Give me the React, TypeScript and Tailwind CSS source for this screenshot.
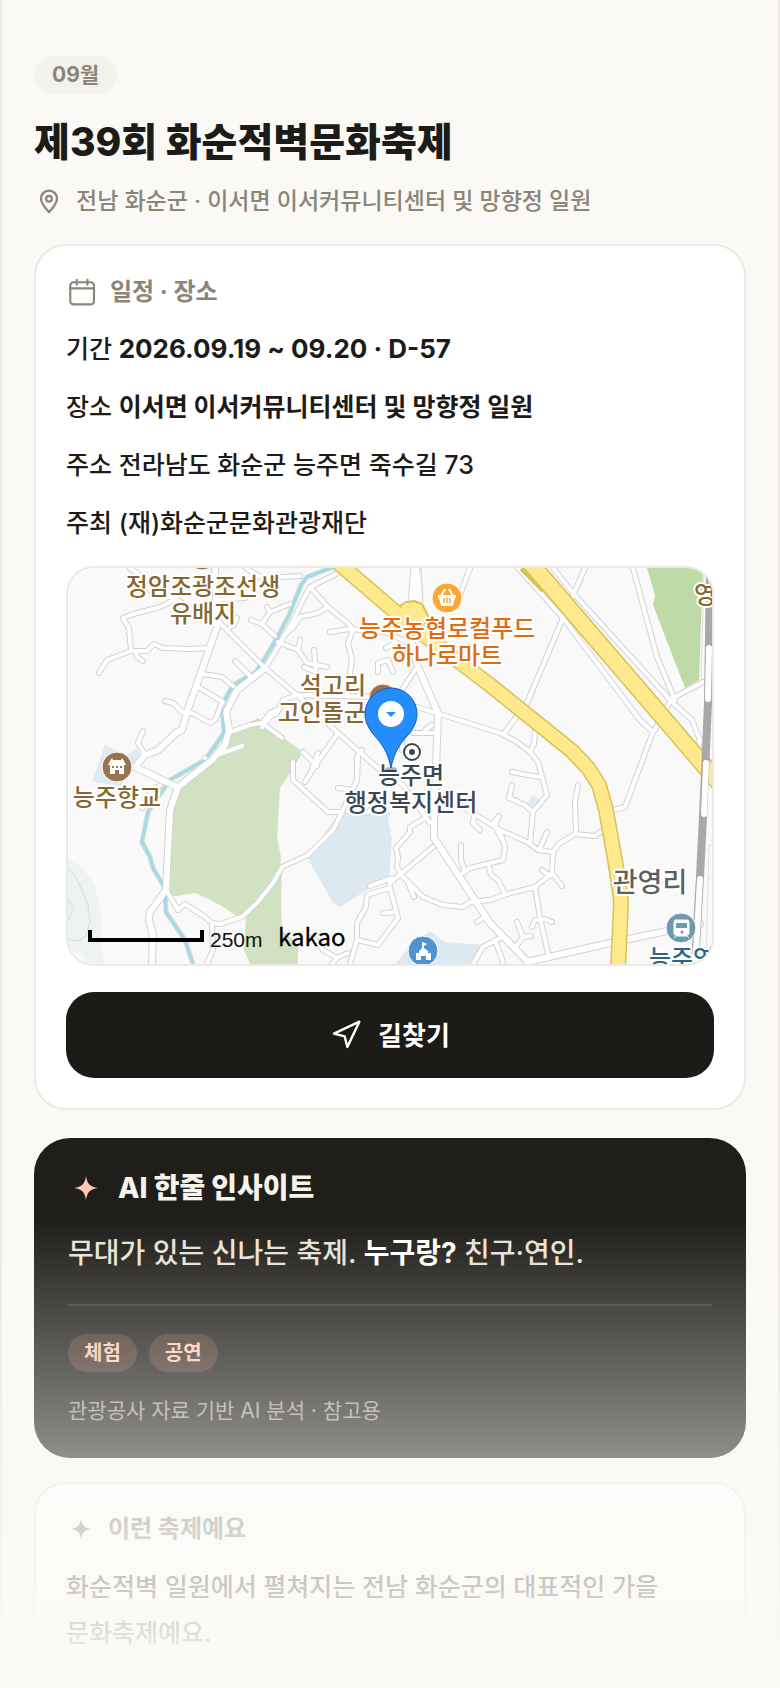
import type { ReactNode } from "react";
import { Navigation } from "lucide-react";

interface LabelProps {
  x: number;
  y: number;
  color: string;
  size?: number;
  anchor?: "start" | "middle" | "end";
  children: ReactNode;
}

const roads = [
  "M176 599L160 607L130 615L123 618L129 628L131 651L107 660L99 673",
  "M131 651H147L154 644L163 648L192 649L208 648",
  "M136 652L137 657L143 661",
  "M130 568L142 577L150 590L176 599L196 612",
  "M246 568L262 578L300 576M217 600L245 598",
  "M145 755L138 743L143 731",
  "M203 674L222 677L233 686",
  "M198 687L223 702",
  "M165 701L173 703L182 712L192 713L210 723L215 720L222 703",
  "M235 661L250 676M237 618L234 625L230 627",
  "M251 620L262 624L275 636M262 624L270 612L267 607M270 612L290 604",
  "M340 572L310 587L304 598L292 623L272 657L265 668",
  "M217 620L265 668L297 695L338 733L380 770L403 785L430 823",
  "M310 587L328 607L318 613L300 617L293 628L284 635",
  "M328 607L350 625L353 630L348 643L352 660L347 695",
  "M330 632L350 629L385 632L407 642",
  "M278 642L298 650L307 663L327 667M300 640L298 650M314 650L316 672L304 667",
  "M378 672V663L388 660L393 672M386 648L396 642",
  "M415 670L400 693M297 695L377 697M297 695L283 700L277 713L270 717L262 727",
  "M338 733L317 763L305 782M293 762V780L328 812L342 812",
  "M303 752L317 766M318 753L312 768",
  "M417 707L500 733L517 742L530 752L538 762L547 795L533 812L530 843",
  "M413 733H437M425 730L432 725M402 738V750",
  "M470 568L458 600",
  "M585 568L563 618L527 703L503 735M535 730L534 744L530 752",
  "M518 568L563 618L640 720L653 732L625 807L613 810",
  "M553 568L573 593L673 703L692 720L700 740L698 750",
  "M633 568L657 657L675 700",
  "M655 730L667 707L673 698L703 682",
  "M447 797L500 830L527 842L538 850L553 852L560 843L575 834L595 836L603 830",
  "M578 785L575 803L576 834M547 832L540 848M498 817L493 824",
  "M553 852L552 873L535 887L507 894L490 900L470 902L463 907L443 905L423 897L403 877L397 867L398 857L396 848L410 832L410 827L425 818",
  "M552 873L562 886M542 870L550 876",
  "M535 887L540 918L548 953M532 927L535 920L545 919L552 922",
  "M500 832L505 847L503 860L470 868L463 873M461 845V860L465 872",
  "M489 867L491 875L498 880L505 894",
  "M517 922L523 937L515 948M523 937L531 936",
  "M512 785L509 798L525 805L533 812M512 772L527 775L540 777",
  "M495 940L503 962M500 938L483 947L473 964",
  "M474 815L473 823L480 830M499 816L495 826L501 838",
  "M433 847L390 883L389 888L367 895L366 907L357 923L357 940L350 964",
  "M370 886L392 878M390 888L398 918L378 945L357 940M383 913L395 912",
  "M338 788L352 790M358 758L357 780M367 813L378 803M409 885L414 897",
  "M477 922L485 917",
  "M313 937L323 950L337 958L348 953M337 958L332 964",
  "M212 923L213 950L207 964M160 785L148 795L142 808",
  "M168 893L178 910L185 904L205 917L212 923L220 924L242 917L257 903L273 883L282 867L308 855L333 830L342 812L357 780L357 757L362 750",
  "M217 755L242 746M230 732L250 725L262 723L282 738",
  "M262 723L270 713L280 708",
];

const wideRoads = [
  "M215 568L217 627L187 712L182 730L177 732L158 750L145 755L135 767L177 787",
  "M265 668L250 680L237 690L226 712L229 730L225 745L212 760L178 787L170 810L168 850L166 890L150 912L149 920L153 935L152 964",
  "M416 568L414 600M408 630L418 667L438 713L434 823V838L490 923L527 961",
  "M527 962L610 943L700 924",
];

const river =
  "M333 567L307 577L301 585L289 615L277 638L262 663L256 672L233 685L222 705L224 733L205 760L170 780L148 812L142 842L150 857L153 868L165 888L166 912L185 940L193 964";

const Label = ({ x, y, color, size = 24, anchor = "middle", children }: LabelProps) => (
  <text
    x={x}
    y={y}
    fontSize={size}
    fontWeight={500}
    textAnchor={anchor}
    fill={color}
    stroke="#fff"
    strokeWidth={4}
    strokeLinejoin="round"
    paintOrder="stroke"
  >
    {children}
  </text>
);

const PinIcon = () => (
  <svg className="size-[30px] shrink-0" viewBox="0 0 24 24" fill="none" stroke="currentColor" strokeWidth={1.8}>
    <path d="M12 21C9 17.600 5.600 14.200 5.600 10a6.400 6.400 0 0 1 12.800 0C18.400 14.200 15 17.600 12 21Z" strokeLinejoin="round" />
    <circle cx="12" cy="10.200" r="2.300" />
  </svg>
);

const CalendarIcon = () => (
  <svg
    className="size-8 shrink-0"
    viewBox="0 0 24 24"
    fill="none"
    stroke="currentColor"
    strokeWidth={1.6}
    strokeLinecap="round"
  >
    <rect x="3.200" y="4.700" width="17.800" height="16.600" rx="2.400" />
    <path d="M3.200 9.300H21M8.100 2.900V6.600M16.100 2.900V6.600" />
  </svg>
);

const SparkIcon = ({ className }: { className: string }) => (
  <svg className={className} viewBox="0 0 24 24" fill="currentColor">
    <path d="M12 4C12.800 9.200 14.600 11.200 20 12C14.600 12.800 12.800 14.800 12 20C11.200 14.800 9.400 12.800 4 12C9.400 11.200 11.200 9.200 12 4Z" />
  </svg>
);

const FestivalMap = () => (
  <svg
    className="block size-full"
    viewBox="68 568 644 396"
    preserveAspectRatio="xMidYMid slice"
    role="img"
    aria-label="능주면 행정복지센터 주변 지도"
  >
    <rect x="0" y="500" width="780" height="500" fill="#f9f9f9" />

    {/* land use */}
    <path d="M0 850L68 860L80 865L95 885L101 915L101 945L104 964H0Z" fill="#edf3ef" />
    <path d="M68 869L76 877L88 905L90 922L86 936L78 941L68 939M68 898L74 909L68 920" fill="none" stroke="#d5dbd7" />
    <path d="M68 950L83 953L86 964H68Z" fill="#f9f9f9" />
    <path
      d="M230 732L258 718L270 728L303 752L292 770L280 788L277 838L281 857L280 870L270 885L257 903L238 917L222 906L196 893L170 897L171 815L180 787L212 757Z"
      fill="#d1e2c2"
    />
    <path d="M246 916L270 890L282 868L281 905L282 930L298 945V964H250L244 950Z" fill="#d1e2c2" />
    <path d="M647 568L655 595L653 605L685 688L699 680L703 568Z" fill="#bfdaa9" />
    <path d="M92 782L105 745L127 755L137 749L142 758L125 775L122 786Z" fill="#dfeaf2" />
    <path d="M307 857L340 812L391 812L388 820L392 838L389 878L370 888L340 907L333 903Z" fill="#dde9f1" />
    <path d="M395 964L413 943L430 931L445 942L483 945L477 964Z" fill="#dde9f1" />
    <path d="M527 803L533 795L541 801L534 809Z" fill="#dcebf3" />

    {/* side roads */}
    <g fill="none" strokeLinecap="round" strokeLinejoin="round">
      <g stroke="#d2d2d2">
        {roads.map((d) => (
          <path key={d} d={d} strokeWidth={6} />
        ))}
        {wideRoads.map((d) => (
          <path key={d} d={d} strokeWidth={8} />
        ))}
      </g>
      <path d={river} stroke="#d1e2c2" strokeWidth={5} />
      <path d={river} stroke="#a3d8ee" strokeWidth={3} />
      <g stroke="#fff">
        {roads.map((d) => (
          <path key={d} d={d} strokeWidth={4} />
        ))}
        {wideRoads.map((d) => (
          <path key={d} d={d} strokeWidth={6} />
        ))}
      </g>
      <circle cx="205" cy="758" r="2.500" fill="#fff" stroke="#d2d2d2" />
    </g>
    <path d="M410 568L408 602L421 604L419 568Z" fill="#fff" />
    <path d="M411 568L408 602M421 568L423 602" stroke="#d2d2d2" />

    {/* trunk roads */}
    <g fill="none" strokeLinejoin="round">
      <path d="M395 609L406 602L414 601L422 604L430 620L414 630Z" fill="#ffe98c" stroke="#d6c256" strokeWidth={2} />
      <path
        d="M335 560L407 622L490 685L572 751L588 768L599 785L606 810L615 860L620 893L621 903L618 970"
        stroke="#d6c256"
        strokeWidth={16}
      />
      <path d="M526 564L548 586M528 560L720 784" stroke="#d6c256" strokeWidth={18} />
      <path
        d="M335 560L407 622L490 685L572 751L588 768L599 785L606 810L615 860L620 893L621 903L618 970"
        stroke="#ffe98c"
        strokeWidth={13}
      />
      <path d="M528 560L720 784" stroke="#ffe98c" strokeWidth={15} />
      <path d="M399 609L408 604L414 603L420 606L427 620L416 628Z" fill="#ffe98c" />
    </g>

    {/* railway */}
    <g fill="none">
      <path d="M704 568L701 680M712 845H709L706 964" stroke="#dedede" />
      <path d="M710 568L708 703L705 773L703 817L700 877L695 964" stroke="#a8a8a8" strokeWidth={8} />
      <path d="M709 648L708 699M706 763L704 814M700 879L695 970" stroke="#fff" strokeWidth={6} strokeLinecap="round" />
    </g>

    {/* place badges */}
    <g stroke="#fff" strokeWidth={1}>
      <circle cx="202" cy="556" r="14" fill="#9b714e" />
      <circle cx="383" cy="698" r="14" fill="#9b714e" />
      <circle cx="117" cy="767" r="15" fill="#9b714e" />
      <circle cx="447" cy="598" r="15" fill="#f9a632" />
      <circle cx="423" cy="951" r="15" fill="#4f93cf" />
      <circle cx="681" cy="928" r="15" fill="#6f9aac" />
    </g>
    <path
      d="M110 761L112 758L113 760H121L122 758L124 761L126 765H124V774H119V770H115V774H110V765H108Z"
      fill="#fff"
    />
    <path d="M112 766H114V768H112ZM116 766H118V768H116ZM120 766H122V768H120Z" fill="#9b714e" />
    <path d="M438 595H456V598H455L453 606H441L439 598H438Z" fill="#fff" />
    <path d="M441 596L445 589M453 596L449 589" stroke="#fff" strokeWidth={2} />
    <path d="M444 598V603M447 598V603M450 598V603" stroke="#f9a632" strokeWidth={1.5} />
    <path d="M423 942L427 944L424 946V948L428 951V953H431V960H426V956H421V960H416V953H419V951L422 948V942Z" fill="#fff" />
    <path d="M675 920H688L689 922V934L686 936H677L674 934V922ZM676 936L674 938M687 936L689 938" fill="#fff" stroke="#fff" />
    <path d="M676 923H687V928H676Z" fill="#6f9aac" />
    <circle cx="682" cy="932" r="1.500" fill="#6f9aac" />

    {/* place names */}
    <g className="font-['Noto_Sans_CJK_KR',sans-serif]">
      <Label x={203} y={595} color="#866731">정암조광조선생</Label>
      <Label x={203} y={622} color="#866731">유배지</Label>
      <Label x={447} y={637} color="#e06c10">능주농협로컬푸드</Label>
      <Label x={447} y={664} color="#e06c10">하나로마트</Label>
      <Label x={366} y={694} color="#866731" anchor="end">석고리</Label>
      <Label x={366} y={721} color="#866731" anchor="end">고인돌군</Label>
      <Label x={117} y={806} color="#866731">능주향교</Label>
      <Label x={411} y={784} color="#3b4750">능주면</Label>
      <Label x={411} y={811} color="#3b4750">행정복지센터</Label>
      <Label x={650} y={892} color="#5f5f5f" size={27}>관영리</Label>
      <Label x={682} y={967} color="#2f6582">능주역</Label>
      <Label x={694} y={603} color="#866731" anchor="start">영</Label>
      <text x="278" y="946" fontSize={24} fontWeight={400} stroke="#000" strokeWidth={0.3}>kakao</text>
    </g>
    <circle cx="412" cy="752" r="10" fill="#fff" />
    <circle cx="412" cy="752" r="8" fill="none" stroke="#3b4750" strokeWidth={2} />
    <circle cx="412" cy="752" r="3" fill="#3b4750" />

    {/* scale bar */}
    <path d="M90 930V940H202V930" fill="none" stroke="#000" strokeWidth={4} />
    <text className="font-['Liberation_Sans',sans-serif]" x="210" y="947" fontSize={21} fill="#111">
      250m
    </text>

    {/* selected spot */}
    <ellipse cx="391" cy="769" rx="6" ry="2" fill="#000" opacity={0.3} />
    <path
      d="M391 768C388 752 382 744 374 735C368 728 365 721 365 714A26 26 0 0 1 417 714C417 721 414 728 408 735C400 744 394 752 391 768Z"
      fill="#258cfc"
      stroke="#1757bd"
    />
    <circle cx="391" cy="714" r="13" fill="#fff" />
    <path d="M386 712H396L391 717Z" fill="#258cfc" />
  </svg>
);

export default function App() {
  const tags = ["체험", "공연"];

  return (
    <main className="relative min-h-screen border-x-2 border-[#ebe9e1] bg-[#faf9f5] px-8 pt-14 font-['Inter','Noto_Sans_CJK_KR',sans-serif] font-medium text-[#1c1b17]">
      <header>
        <span className="inline-flex h-[38px] items-center rounded-full bg-[#f3f2ed] px-[18px] align-top text-[21px] font-bold text-[#8a8578]">
          09월
        </span>
        <h1 className="mt-[22px] text-[39px] leading-[52px] font-extrabold">제39회 화순적벽문화축제</h1>
        <p className="mt-[18px] flex items-center gap-3 text-[23px] leading-[30px] text-[#8a8578]">
          <PinIcon />
          전남 화순군 · 이서면 이서커뮤니티센터 및 망향정 일원
        </p>
      </header>

      <section className="mt-7 rounded-[32px] border-2 border-[#ebe9e1] bg-white p-[30px]">
        <h2 className="flex items-center gap-3 text-2xl leading-8 font-bold text-[#8a8578]">
          <CalendarIcon />
          일정 · 장소
        </h2>
        <div className="mt-5 flex flex-col gap-4 text-[25px] leading-[42px]">
          <p>
            기간 <strong className="text-[26px]">2026.09.19 ~ 09.20 · D-57</strong>
          </p>
          <p>
            장소 <strong>이서면 이서커뮤니티센터 및 망향정 일원</strong>
          </p>
          <p>주소 전라남도 화순군 능주면 죽수길 73</p>
          <p>주최 (재)화순군문화관광재단</p>
        </div>
        <div className="mt-[22px] h-[400px] overflow-hidden rounded-[28px] border-2 border-[#ebe9e1]">
          <FestivalMap />
        </div>
        <button
          type="button"
          className="mt-[26px] flex h-[86px] w-full items-center justify-center gap-4 rounded-[28px] bg-[#1c1b17] text-[26px] font-bold text-white"
        >
          <Navigation className="size-8" strokeWidth={1.8} />
          길찾기
        </button>
      </section>

      <section className="mt-7 rounded-[36px] bg-[#1f1e1a] px-[34px] py-8">
        <h2 className="flex items-center gap-[14px] text-[28px] leading-9 font-extrabold text-[#f5f3ec]">
          <SparkIcon className="size-9 shrink-0 text-[#ffc9b5]" />
          AI 한줄 인사이트
        </h2>
        <p className="mt-6 text-[28px] leading-[46px] text-[#e6e2d6]">
          무대가 있는 신나는 축제. <strong className="text-white">누구랑?</strong> 친구·연인.
        </p>
        <hr className="mt-7 border-t-2 border-white/12" />
        <ul className="mt-7 flex gap-3">
          {tags.map((tag) => (
            <li
              key={tag}
              className="flex h-[38px] items-center rounded-full bg-[#ff9c7d]/18 px-4 text-xl font-bold text-[#ffc9b5]"
            >
              {tag}
            </li>
          ))}
        </ul>
        <p className="mt-6 text-[21px] leading-[30px] font-normal text-[#a09c90]">
          관광공사 자료 기반 AI 분석 · 참고용
        </p>
      </section>

      <section className="mt-6 rounded-[32px] border-2 border-[#ebe9e1] bg-white p-[30px]">
        <h2 className="flex items-center gap-3 text-2xl leading-[30px] font-bold text-[#8a8578]">
          <SparkIcon className="size-[30px] shrink-0" />
          이런 축제예요
        </h2>
        <p className="mt-5 text-[25px] leading-[46px] break-keep text-[#1c1b17]">
          화순적벽 일원에서 펼쳐지는 전남 화순군의 대표적인 가을 문화축제예요.
        </p>
      </section>

      {/* fades the rest of the page out */}
      <div className="pointer-events-none absolute -inset-x-0.5 bottom-0 h-[470px] bg-linear-to-b from-[#faf9f5]/0 to-[#faf9f5]" />
    </main>
  );
}
